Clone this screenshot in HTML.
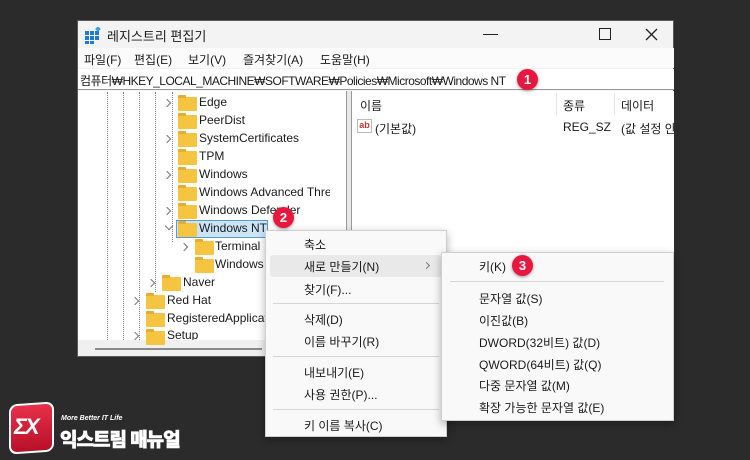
<!DOCTYPE html><html><head><meta charset="utf-8"><style>
*{margin:0;padding:0;box-sizing:border-box}
body{width:750px;height:460px;background:#2b2b2b;position:relative;overflow:hidden;font-family:"Liberation Sans","Noto Sans CJK KR",sans-serif;font-size:12px;color:#1a1a1a}
.a{position:absolute;white-space:nowrap}
.win{position:absolute;left:77px;top:20px;width:597px;height:337px;background:#f3f3f3;border:1px solid #5a5a5a}
.fd{position:absolute;width:19px;height:14px;background:#f5c542;border-radius:1px}
.fd:before{content:"";position:absolute;left:0;top:-2px;width:8px;height:3px;background:#e8ad2a;border-radius:1px 1px 0 0}
.badge{position:absolute;width:21px;height:21px;border-radius:50%;background:#e8173e;color:#fff;font-weight:bold;font-size:13px;text-align:center;line-height:21px;box-shadow:0 1px 3px rgba(0,0,0,.4)}
.menu{position:absolute;background:#f9f9f9;border:1px solid #d0d0d0;box-shadow:0 3px 8px rgba(0,0,0,.3)}
.sep{position:absolute;height:1px;background:#d5d5d5}
.vl{position:absolute;border-left:1px dotted #888;top:92px;height:250px}
.chev{position:absolute;width:6px;height:6px;border-top:1.3px solid #777;border-right:1.3px solid #777;transform:rotate(45deg)}
.chev.d{transform:rotate(135deg)}
</style></head><body>
<div class="win"></div>
<svg class="a" style="left:84px;top:27px" width="18" height="18"><g fill="#1e7ad6"><rect x="1" y="4" width="4" height="4"/><rect x="6" y="4" width="4" height="4"/><rect x="11" y="4" width="4" height="4"/><rect x="1" y="9" width="4" height="4"/><rect x="6" y="9" width="4" height="4"/><rect x="11" y="9" width="4" height="4"/><rect x="1" y="14" width="4" height="3"/><rect x="6" y="14" width="4" height="3"/></g><rect x="12" y="0" width="4" height="4" fill="#3aa0f0" transform="rotate(45 14 2)"/></svg>
<div class="a" style="left:107px;top:26px;font-size:13px">레지스트리 편집기</div>
<div class="a" style="left:483px;top:34px;width:15px;height:1px;background:#222"></div>
<div class="a" style="left:599px;top:28px;width:12px;height:12px;border:1.3px solid #222"></div>
<svg class="a" style="left:645px;top:28px" width="13" height="13"><path d="M1 1L12 12M12 1L1 12" stroke="#222" stroke-width="1.3"/></svg>
<div class="a" style="left:78px;top:48px;width:596px;height:20px;background:#fbfbfb"></div>
<div class="a" style="left:84px;top:51px">파일(F)</div>
<div class="a" style="left:134px;top:51px">편집(E)</div>
<div class="a" style="left:188px;top:51px">보기(V)</div>
<div class="a" style="left:243px;top:51px">즐겨찾기(A)</div>
<div class="a" style="left:320px;top:51px">도움말(H)</div>
<div class="a" style="left:78px;top:69px;width:596px;height:21px;background:#fff;border-bottom:1px solid #9a9a9a"></div>
<div class="a" style="left:80px;top:72px;letter-spacing:-0.5px">컴퓨터₩HKEY_LOCAL_MACHINE₩SOFTWARE₩Policies₩Microsoft₩Windows NT</div>
<div class="a" style="left:78px;top:91px;width:268px;height:265px;background:#fff"></div>
<div class="a" style="left:346px;top:91px;width:6px;height:265px;background:#e8e8e8;border-left:1px solid #999;border-right:1px solid #999"></div>
<div class="a" style="left:352px;top:91px;width:322px;height:265px;background:#fff"></div>
<div class="vl" style="left:107px"></div><div class="vl" style="left:123px"></div><div class="vl" style="left:139px"></div><div class="vl" style="left:155px;height:200px"></div>
<div class="vl" style="left:172px;height:150px"></div>
<div class="a" style="left:78px;top:340px;width:268px;height:16px;background:#f0f0f0"></div>
<div class="a" style="left:95px;top:348px;width:167px;height:2px;background:#8a8a8a"></div>
<div class="chev" style="left:164px;top:100px"></div><div class="fd" style="left:178px;top:97px"></div><div class="a" style="left:199px;top:95px">Edge</div>
<div class="fd" style="left:178px;top:115px"></div><div class="a" style="left:199px;top:113px">PeerDist</div>
<div class="chev" style="left:164px;top:136px"></div><div class="fd" style="left:178px;top:133px"></div><div class="a" style="left:199px;top:131px">SystemCertificates</div>
<div class="fd" style="left:178px;top:151px"></div><div class="a" style="left:199px;top:149px">TPM</div>
<div class="chev" style="left:164px;top:172px"></div><div class="fd" style="left:178px;top:169px"></div><div class="a" style="left:199px;top:167px">Windows</div>
<div class="fd" style="left:178px;top:187px"></div><div class="a" style="left:199px;top:185px;width:131px;overflow:hidden">Windows Advanced Threat</div>
<div class="chev" style="left:164px;top:208px"></div><div class="fd" style="left:178px;top:205px"></div><div class="a" style="left:199px;top:203px">Windows Defender</div>
<div class="chev d" style="left:166px;top:223px"></div>
<div class="a" style="left:176px;top:220px;width:92px;height:18px;background:#cce4f7;border:1px solid #5a9bd5"></div>
<div class="fd" style="left:178px;top:223px"></div><div class="a" style="left:199px;top:221px">Windows NT</div>
<div class="chev" style="left:181px;top:244px"></div><div class="fd" style="left:195px;top:241px"></div><div class="a" style="left:215px;top:239px">Terminal</div>
<div class="fd" style="left:195px;top:259px"></div><div class="a" style="left:215px;top:257px">Windows</div>
<div class="chev" style="left:148px;top:280px"></div><div class="fd" style="left:162px;top:277px"></div><div class="a" style="left:183px;top:275px">Naver</div>
<div class="chev" style="left:132px;top:298px"></div><div class="fd" style="left:146px;top:295px"></div><div class="a" style="left:167px;top:293px">Red Hat</div>
<div class="fd" style="left:146px;top:313px"></div><div class="a" style="left:167px;top:311px">RegisteredApplications</div>
<div class="chev" style="left:132px;top:333px"></div><div class="fd" style="left:146px;top:331px"></div><div class="a" style="left:167px;top:328px;height:12px;overflow:hidden">Setup</div>
<div class="a" style="left:360px;top:97px">이름</div>
<div class="a" style="left:556px;top:93px;width:1px;height:22px;background:#e5e5e5"></div>
<div class="a" style="left:614px;top:93px;width:1px;height:22px;background:#e5e5e5"></div>
<div class="a" style="left:563px;top:97px">종류</div>
<div class="a" style="left:621px;top:97px">데이터</div>
<div class="a" style="left:357px;top:119px;width:15px;height:14px;border:1px solid #bbb;background:#fff;color:#c0392b;font-size:9px;font-weight:bold;line-height:11px;text-align:center">ab</div>
<div class="a" style="left:375px;top:120px">(기본값)</div>
<div class="a" style="left:563px;top:120px">REG_SZ</div>
<div class="a" style="left:621px;top:120px;width:53px;overflow:hidden">(값 설정 안 됨)</div>
<div class="menu" style="left:265px;top:230px;width:182px;height:207px"></div>
<div class="a" style="left:270px;top:255px;width:172px;height:22px;background:#e9e9e9;border-radius:3px"></div>
<div class="a" style="left:304px;top:236px">축소</div>
<div class="a" style="left:304px;top:258px">새로 만들기(N)</div><div class="chev" style="left:424px;top:263px;width:5px;height:5px"></div>
<div class="a" style="left:304px;top:281px">찾기(F)...</div>
<div class="sep" style="left:273px;top:303px;width:166px"></div>
<div class="a" style="left:304px;top:311px">삭제(D)</div>
<div class="a" style="left:304px;top:333px">이름 바꾸기(R)</div>
<div class="sep" style="left:273px;top:356px;width:166px"></div>
<div class="a" style="left:304px;top:364px">내보내기(E)</div>
<div class="a" style="left:304px;top:386px">사용 권한(P)...</div>
<div class="sep" style="left:273px;top:409px;width:166px"></div>
<div class="a" style="left:304px;top:417px">키 이름 복사(C)</div>
<div class="menu" style="left:441px;top:252px;width:233px;height:169px"></div>
<div class="a" style="left:479px;top:258px">키(K)</div>
<div class="sep" style="left:450px;top:281px;width:214px"></div>
<div class="a" style="left:479px;top:290px">문자열 값(S)</div>
<div class="a" style="left:479px;top:312px">이진값(B)</div>
<div class="a" style="left:479px;top:334px">DWORD(32비트) 값(D)</div>
<div class="a" style="left:479px;top:356px">QWORD(64비트) 값(Q)</div>
<div class="a" style="left:479px;top:377px">다중 문자열 값(M)</div>
<div class="a" style="left:479px;top:399px">확장 가능한 문자열 값(E)</div>
<div class="badge" style="left:517px;top:69px">1</div>
<div class="badge" style="left:273px;top:207px">2</div>
<div class="badge" style="left:512px;top:255px">3</div>
<div class="a" style="left:9px;top:403px;width:45px;height:50px;background:linear-gradient(#e8304a,#b8102a);border:2px solid #fff;border-radius:8px;transform:skewY(-4deg)"></div>
<div class="a" style="left:14px;top:414px;color:#fff;font-weight:bold;font-size:22px;font-style:italic;letter-spacing:-2px">ΣX</div>
<div class="a" style="left:61px;top:415px;color:#fff;font-weight:bold;font-size:7px;font-style:italic">More Better IT Life</div>
<div class="a" style="left:60px;top:425px;color:#fff;font-weight:900;font-size:19px;letter-spacing:-1px;-webkit-text-stroke:0.6px #fff">익스트림 매뉴얼</div>
</body></html>
